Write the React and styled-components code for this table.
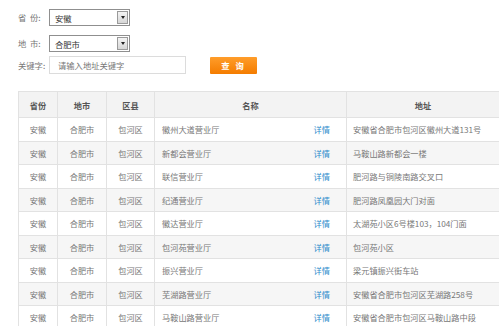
import React from "react";
import styled, { createGlobalStyle } from "styled-components";

const GlobalStyle = createGlobalStyle`
  html, body { margin: 0; padding: 0; background: #fff; }
  body { font-family: "Noto Sans CJK SC", "Noto Sans", sans-serif; color: #666; }
`;

const Page = styled.div`
  width: 499px;
  height: 326px;
  overflow: hidden;
  padding: 9px 0 0 18px;
  box-sizing: border-box;
`;

const Form = styled.div`
  display: flex;
  flex-direction: column;
`;

const FormRow = styled.div`
  display: flex;
  align-items: center;
  height: ${(p) => p.h || 17}px;
  margin-top: ${(p) => p.mt || 0}px;
`;

const Label = styled.span`
  width: 31px;
  font-size: 8.3px;
  color: #777;
  white-space: pre;
  line-height: 1;
`;

const Select = styled.div`
  width: 81px;
  height: 17px;
  box-sizing: border-box;
  border: 1px solid #8f8f8f;
  background: #fff;
  display: flex;
  align-items: center;
  justify-content: space-between;
  padding: 0 1px 0 5px;
  font-size: 8.3px;
  color: #333;
`;

const Arrow = styled.span`
  width: 11px;
  height: 13px;
  box-sizing: border-box;
  border: 1px solid #9a9a9a;
  background: linear-gradient(#f4f4f4, #d6d6d6);
  display: flex;
  align-items: center;
  justify-content: center;
  &::after {
    content: "";
    border-left: 2.5px solid transparent;
    border-right: 2.5px solid transparent;
    border-top: 3px solid #222;
  }
`;

const Input = styled.div`
  width: 137px;
  height: 18px;
  box-sizing: border-box;
  border: 1px solid #dcdcdc;
  display: flex;
  align-items: center;
  padding-left: 8px;
  font-size: 8.3px;
  color: #777;
`;

const Button = styled.button`
  margin-left: 24px;
  width: 47px;
  height: 17px;
  border: none;
  border-radius: 1px;
  background: linear-gradient(#ff9d2a, #f47c00);
  color: #fff;
  font-weight: bold;
  font-size: 8.3px;
  font-family: inherit;
  padding: 0;
  letter-spacing: 2px;
`;

const Table = styled.table`
  margin-top: 17px;
  width: 481px;
  border-collapse: collapse;
  table-layout: fixed;
  font-size: 8.2px;
`;

const Th = styled.th`
  height: 25px;
  padding: 0;
  border: 1px solid #e2e2e2;
  background: #f3f3f3;
  color: #555;
  font-weight: bold;
  text-align: center;
`;

const Tr = styled.tr`
  height: 23.5px;
  background: ${(p) => (p.alt ? "#f6f6f6" : "#fff")};
`;

const Td = styled.td`
  padding: 0 ${(p) => (p.left ? "6px" : "0")};
  border: 1px solid #e2e2e2;
  color: #777;
  text-align: ${(p) => (p.left ? "left" : "center")};
  white-space: nowrap;
  overflow: hidden;
`;

const NameCell = styled.div`
  display: flex;
  justify-content: space-between;
  padding: 0 10px 0 1px;
`;

const Detail = styled.a`
  color: #2f8ccc;
  text-decoration: none;
`;

const rows = [
  ["徽州大道营业厅", "安徽省合肥市包河区徽州大道131号"],
  ["新都会营业厅", "马鞍山路新都会一楼"],
  ["联信营业厅", "肥河路与铜陵南路交叉口"],
  ["纪通营业厅", "肥河路凤凰园大门对面"],
  ["徽达营业厅", "太湖苑小区6号楼103，104门面"],
  ["包河苑营业厅", "包河苑小区"],
  ["振兴营业厅", "梁元镇振兴街车站"],
  ["芜湖路营业厅", "安徽省合肥市包河区芜湖路258号"],
  ["马鞍山路营业厅", "安徽省合肥市包河区马鞍山路中段"],
];

export default function App() {
  return (
    <>
      <GlobalStyle />
      <Page>
        <Form>
          <FormRow>
            <Label>{"省  份:"}</Label>
            <Select>
              安徽
              <Arrow />
            </Select>
          </FormRow>
          <FormRow mt={9}>
            <Label>{"地  市:"}</Label>
            <Select>
              合肥市
              <Arrow />
            </Select>
          </FormRow>
          <FormRow mt={4} h={18}>
            <Label>关键字:</Label>
            <Input>请输入地址关键字</Input>
            <Button>查 询</Button>
          </FormRow>
        </Form>
        <Table>
          <colgroup>
            <col style={{ width: 39 }} />
            <col style={{ width: 49 }} />
            <col style={{ width: 48 }} />
            <col style={{ width: 192 }} />
            <col style={{ width: 153 }} />
          </colgroup>
          <thead>
            <tr>
              <Th>省份</Th>
              <Th>地市</Th>
              <Th>区县</Th>
              <Th>名称</Th>
              <Th>地址</Th>
            </tr>
          </thead>
          <tbody>
            {rows.map(([name, addr], i) => (
              <Tr key={i} alt={i % 2 === 1}>
                <Td>安徽</Td>
                <Td>合肥市</Td>
                <Td>包河区</Td>
                <Td left>
                  <NameCell>
                    <span>{name}</span>
                    <Detail href="#">详情</Detail>
                  </NameCell>
                </Td>
                <Td left>{addr}</Td>
              </Tr>
            ))}
          </tbody>
        </Table>
      </Page>
    </>
  );
}
